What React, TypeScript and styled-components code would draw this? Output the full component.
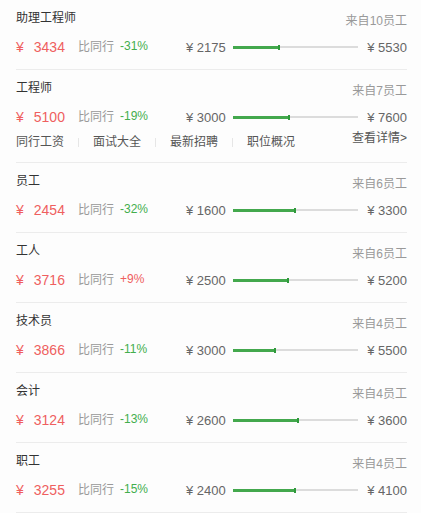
import React from "react";
import styled, { createGlobalStyle } from "styled-components";

const Global = createGlobalStyle`
  html, body { margin: 0; padding: 0; background: #fdfdfd; }
  body { font-family: "Liberation Sans", "Noto Sans CJK SC", sans-serif; }
`;

type Job = {
  title: string;
  count: number;
  avg: number;
  diff: string;
  low: number;
  high: number;
  links?: boolean;
};

const jobs: Job[] = [
  { title: "助理工程师", count: 10, avg: 3434, diff: "-31%", low: 2175, high: 5530 },
  { title: "工程师", count: 7, avg: 5100, diff: "-19%", low: 3000, high: 7600, links: true },
  { title: "员工", count: 6, avg: 2454, diff: "-32%", low: 1600, high: 3300 },
  { title: "工人", count: 6, avg: 3716, diff: "+9%", low: 2500, high: 5200 },
  { title: "技术员", count: 4, avg: 3866, diff: "-11%", low: 3000, high: 5500 },
  { title: "会计", count: 4, avg: 3124, diff: "-13%", low: 2600, high: 3600 },
  { title: "职工", count: 4, avg: 3255, diff: "-15%", low: 2400, high: 4100 },
];

const List = styled.div`
  padding: 0 14px 0 16px;
`;

const Row = styled.div`
  display: flex;
  flex-direction: column;
  padding: 10px 0 12px;
  border-bottom: 1px solid #ececec;
`;

const Header = styled.div`
  display: flex;
  justify-content: space-between;
  align-items: flex-start;
  height: 16px;
`;

const Title = styled.div`
  font-size: 12px;
  line-height: 16px;
  color: #333;
`;

const Source = styled.div`
  font-size: 12px;
  line-height: 23px;
  color: #999;
`;

const PriceRow = styled.div`
  display: flex;
  align-items: center;
  height: 20px;
  margin-top: 11px;
`;

const Price = styled.div`
  width: 62px;
  font-size: 14px;
  color: #ef5f5f;
  white-space: nowrap;
`;

const Yen = styled.span`
  margin-right: 10px;
`;

const Compare = styled.div`
  display: flex;
  align-items: center;
  gap: 6px;
  font-size: 12px;
  color: #999;
  margin-top: -3px;
`;

const Diff = styled.span<{ $up: boolean }>`
  color: ${(p) => (p.$up ? "#ef5f5f" : "#43ae4d")};
`;

const Range = styled.div`
  margin-left: auto;
  width: 221px;
  display: flex;
  align-items: center;
  font-size: 13px;
  color: #666;
`;

const Value = styled.span`
  white-space: nowrap;
  width: 40px;
`;

const HighValue = styled(Value)`
  margin-left: auto;
  text-align: right;
`;

const Track = styled.div`
  width: 125px;
  height: 2px;
  margin-left: 7px;
  background: #dcdcdc;
  display: flex;
  align-items: center;
`;

const Fill = styled.div`
  height: 3px;
  background: #43a84d;
  position: relative;
  &::after {
    content: "";
    position: absolute;
    right: 0;
    top: -1px;
    width: 2px;
    height: 5px;
    background: #2f9a3c;
  }
`;

const Links = styled.div`
  display: flex;
  align-items: flex-start;
  height: 16px;
  margin-top: 7px;
  font-size: 12px;
  line-height: 16px;
  color: #555;
`;

const LinkItem = styled.span`
  display: flex;
  align-items: center;
  & + &::before {
    content: "";
    display: inline-block;
    width: 1px;
    height: 9px;
    background: #e6e6e6;
    margin: 0 14px;
  }
`;

const Details = styled.span`
  margin-left: auto;
  margin-top: -4px;
  color: #555;
`;

export default function App() {
  return (
    <>
      <Global />
      <List>
        {jobs.map((j) => {
          const frac = (j.avg - j.low) / (j.high - j.low);
          return (
            <Row key={j.title}>
              <Header>
                <Title>{j.title}</Title>
                <Source>来自{j.count}员工</Source>
              </Header>
              <PriceRow>
                <Price>
                  <Yen>¥</Yen>
                  {j.avg}
                </Price>
                <Compare>
                  比同行<Diff $up={j.diff.startsWith("+")}>{j.diff}</Diff>
                </Compare>
                <Range>
                  <Value>¥ {j.low}</Value>
                  <Track>
                    <Fill style={{ width: `${frac * 100}%` }} />
                  </Track>
                  <HighValue>¥ {j.high}</HighValue>
                </Range>
              </PriceRow>
              {j.links && (
                <Links>
                  <LinkItem>同行工资</LinkItem>
                  <LinkItem>面试大全</LinkItem>
                  <LinkItem>最新招聘</LinkItem>
                  <LinkItem>职位概况</LinkItem>
                  <Details>查看详情&gt;</Details>
                </Links>
              )}
            </Row>
          );
        })}
      </List>
    </>
  );
}
